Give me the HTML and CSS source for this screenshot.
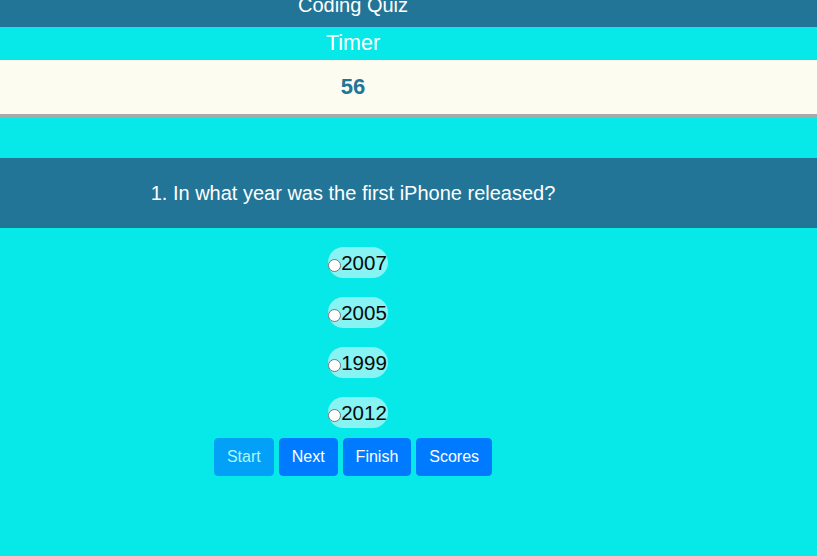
FILE: index.html
```html
<!DOCTYPE html>
<html>
<head>
<meta charset="utf-8">
<link rel="stylesheet" href="styles.css">
</head>
<body>
<header class="top">
  <div class="col"><h1 class="title">Coding Quiz</h1></div>
</header>
<section class="timer-band">
  <div class="col timer-label">Timer</div>
</section>
<section class="time-band">
  <div class="col time-value">56</div>
</section>
<section class="question-band">
  <div class="col question">1. In what year was the first iPhone released?</div>
</section>
<div class="col">
  <ul class="options">
    <li><label class="pill"><input type="radio" name="q" class="radio"><span>2007</span></label></li>
    <li><label class="pill"><input type="radio" name="q" class="radio"><span>2005</span></label></li>
    <li><label class="pill"><input type="radio" name="q" class="radio"><span>1999</span></label></li>
    <li><label class="pill"><input type="radio" name="q" class="radio"><span>2012</span></label></li>
  </ul>
  <div class="buttons">
    <button class="btn btn-disabled">Start</button>
    <button class="btn">Next</button>
    <button class="btn">Finish</button>
    <button class="btn">Scores</button>
  </div>
</div>
</body>
</html>
```
FILE: styles.css
```css
* { box-sizing: border-box; }
body {
  margin: 0;
  background: #07e8e8;
  font-family: "Liberation Sans", Arial, sans-serif;
}
.col {
  width: 706px;
  text-align: center;
}
.top {
  background: #227597;
  height: 27px;
  overflow: hidden;
}
.title {
  margin: -5px 0 0;
  font-size: 20px;
  line-height: 20px;
  font-weight: normal;
  color: #fff;
}
.timer-band {
  height: 33px;
}
.timer-label {
  color: #fff;
  font-size: 21.5px;
  line-height: 33px;
}
.time-band {
  background: #fcfcf0;
  height: 58px;
  border-bottom: 4px solid #a9a9a9;
}
.time-value {
  color: #227597;
  font-weight: bold;
  font-size: 22px;
  line-height: 54px;
}
.question-band {
  margin-top: 40px;
  background: #227597;
  height: 70px;
}
.question {
  color: #fff;
  font-size: 20px;
  line-height: 70px;
}
.options {
  list-style: none;
  margin: 19px 0 0;
  padding: 0;
  display: flex;
  flex-direction: column;
  align-items: center;
  gap: 19px;
}
.pill {
  display: flex;
  align-items: center;
  height: 31px;
  margin-left: 10px;
  padding-right: 1px;
  border-radius: 16px;
  background: #88f3f3;
  font-size: 20.5px;
  color: #0a0a0a;
}
.radio {
  appearance: none;
  -webkit-appearance: none;
  width: 13px;
  height: 13px;
  margin: 5px 0 0 0;
  border: 1px solid #767676;
  border-radius: 50%;
  background: #fff;
}
.buttons {
  margin-top: 10px;
  display: flex;
  justify-content: center;
  gap: 5px;
}
.btn {
  font-family: "Liberation Sans", Arial, sans-serif;
  font-size: 16px;
  line-height: 24px;
  padding: 6px 12px;
  border: 1px solid #007bff;
  border-radius: 4px;
  background: #007bff;
  color: #fff;
}
.btn-disabled {
  opacity: 0.65;
}
```
